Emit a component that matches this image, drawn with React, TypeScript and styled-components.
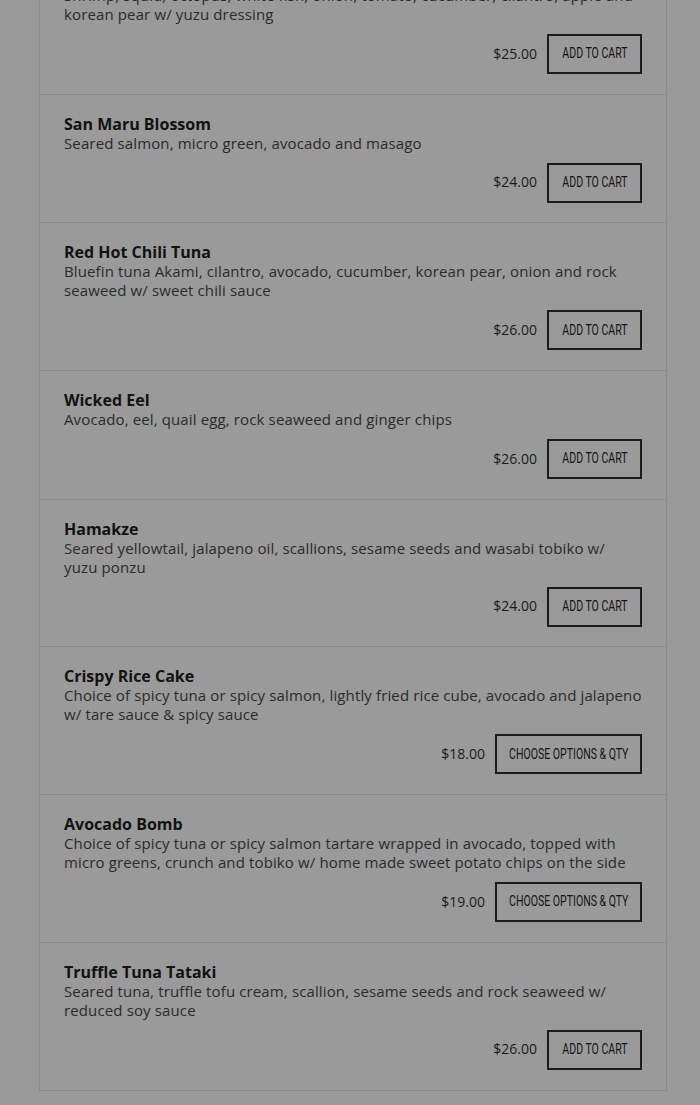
import React from "react";
import styled, { createGlobalStyle } from "styled-components";

const Global = createGlobalStyle`
  html, body { margin: 0; padding: 0; background: #999999; }
  body { font-family: "Open Sans", "Liberation Sans", sans-serif; }
`;

const Page = styled.div`
  height: 1105px;
  overflow: hidden;
  padding: 0 33px 0 39px;
`;

const Card = styled.div`
  margin-top: -54px;
  border: 1px solid #8a8a8a;
  background: #9a9a9a;
`;

const Item = styled.div`
  padding: 20px 24px 19.7px;
  & + & { border-top: 1px solid #8b8b8b; }
`;

const Title = styled.div`
  font-size: 16px;
  line-height: 19px;
  font-weight: 700;
  color: #121212;
`;

const Desc = styled.div`
  font-size: 15px;
  letter-spacing: 0.13px;
  line-height: 19px;
  color: #2b2b2b;
`;

const Row = styled.div`
  margin-top: 10px;
  display: flex;
  justify-content: flex-end;
  align-items: center;
  gap: 10px;
`;

const Price = styled.span`
  font-size: 14px;
  color: #1a1a1a;
  margin-top: -2px;
`;

const Button = styled.button<{ $w: number }>`
  width: ${(p) => p.$w}px;
  height: 40px;
  box-sizing: border-box;
  border: 2px solid #1c1c1c;
  background: transparent;
  padding: 0;
  display: flex;
  align-items: center;
  justify-content: center;
  overflow: visible;
`;

const Label = styled.span`
  display: inline-block;
  white-space: nowrap;
  font-family: Roboto, "DejaVu Sans", sans-serif;
  font-weight: 400;
  font-size: 15.5px;
  line-height: 1;
  color: #141414;
  text-transform: uppercase;
  transform: scaleX(0.68);
`;

type Dish = { name: string; desc: string; price: string; options?: boolean };

const dishes: Dish[] = [
  {
    name: "Seafood Salad",
    desc: "Shrimp, squid, octopus, white fish, onion, tomato, cucumber, cilantro, apple and korean pear w/ yuzu dressing",
    price: "$25.00",
  },
  { name: "San Maru Blossom", desc: "Seared salmon, micro green, avocado and masago", price: "$24.00" },
  {
    name: "Red Hot Chili Tuna",
    desc: "Bluefin tuna Akami, cilantro, avocado, cucumber, korean pear, onion and rock seaweed w/ sweet chili sauce",
    price: "$26.00",
  },
  { name: "Wicked Eel", desc: "Avocado, eel, quail egg, rock seaweed and ginger chips", price: "$26.00" },
  {
    name: "Hamakze",
    desc: "Seared yellowtail, jalapeno oil, scallions, sesame seeds and wasabi tobiko w/ yuzu ponzu",
    price: "$24.00",
  },
  {
    name: "Crispy Rice Cake",
    desc: "Choice of spicy tuna or spicy salmon, lightly fried rice cube, avocado and jalapeno w/ tare sauce & spicy sauce",
    price: "$18.00",
    options: true,
  },
  {
    name: "Avocado Bomb",
    desc: "Choice of spicy tuna or spicy salmon tartare wrapped in avocado, topped with micro greens, crunch and tobiko w/ home made sweet potato chips on the side",
    price: "$19.00",
    options: true,
  },
  {
    name: "Truffle Tuna Tataki",
    desc: "Seared tuna, truffle tofu cream, scallion, sesame seeds and rock seaweed w/ reduced soy sauce",
    price: "$26.00",
  },
];

export default function App() {
  return (
    <>
      <Global />
      <Page>
        <Card>
          {dishes.map((d) => (
            <Item key={d.name}>
              <Title>{d.name}</Title>
              <Desc>{d.desc}</Desc>
              <Row>
                <Price>{d.price}</Price>
                <Button $w={d.options ? 147 : 95}>
                  <Label>{d.options ? "Choose options & Qty" : "Add to cart"}</Label>
                </Button>
              </Row>
            </Item>
          ))}
        </Card>
      </Page>
    </>
  );
}
